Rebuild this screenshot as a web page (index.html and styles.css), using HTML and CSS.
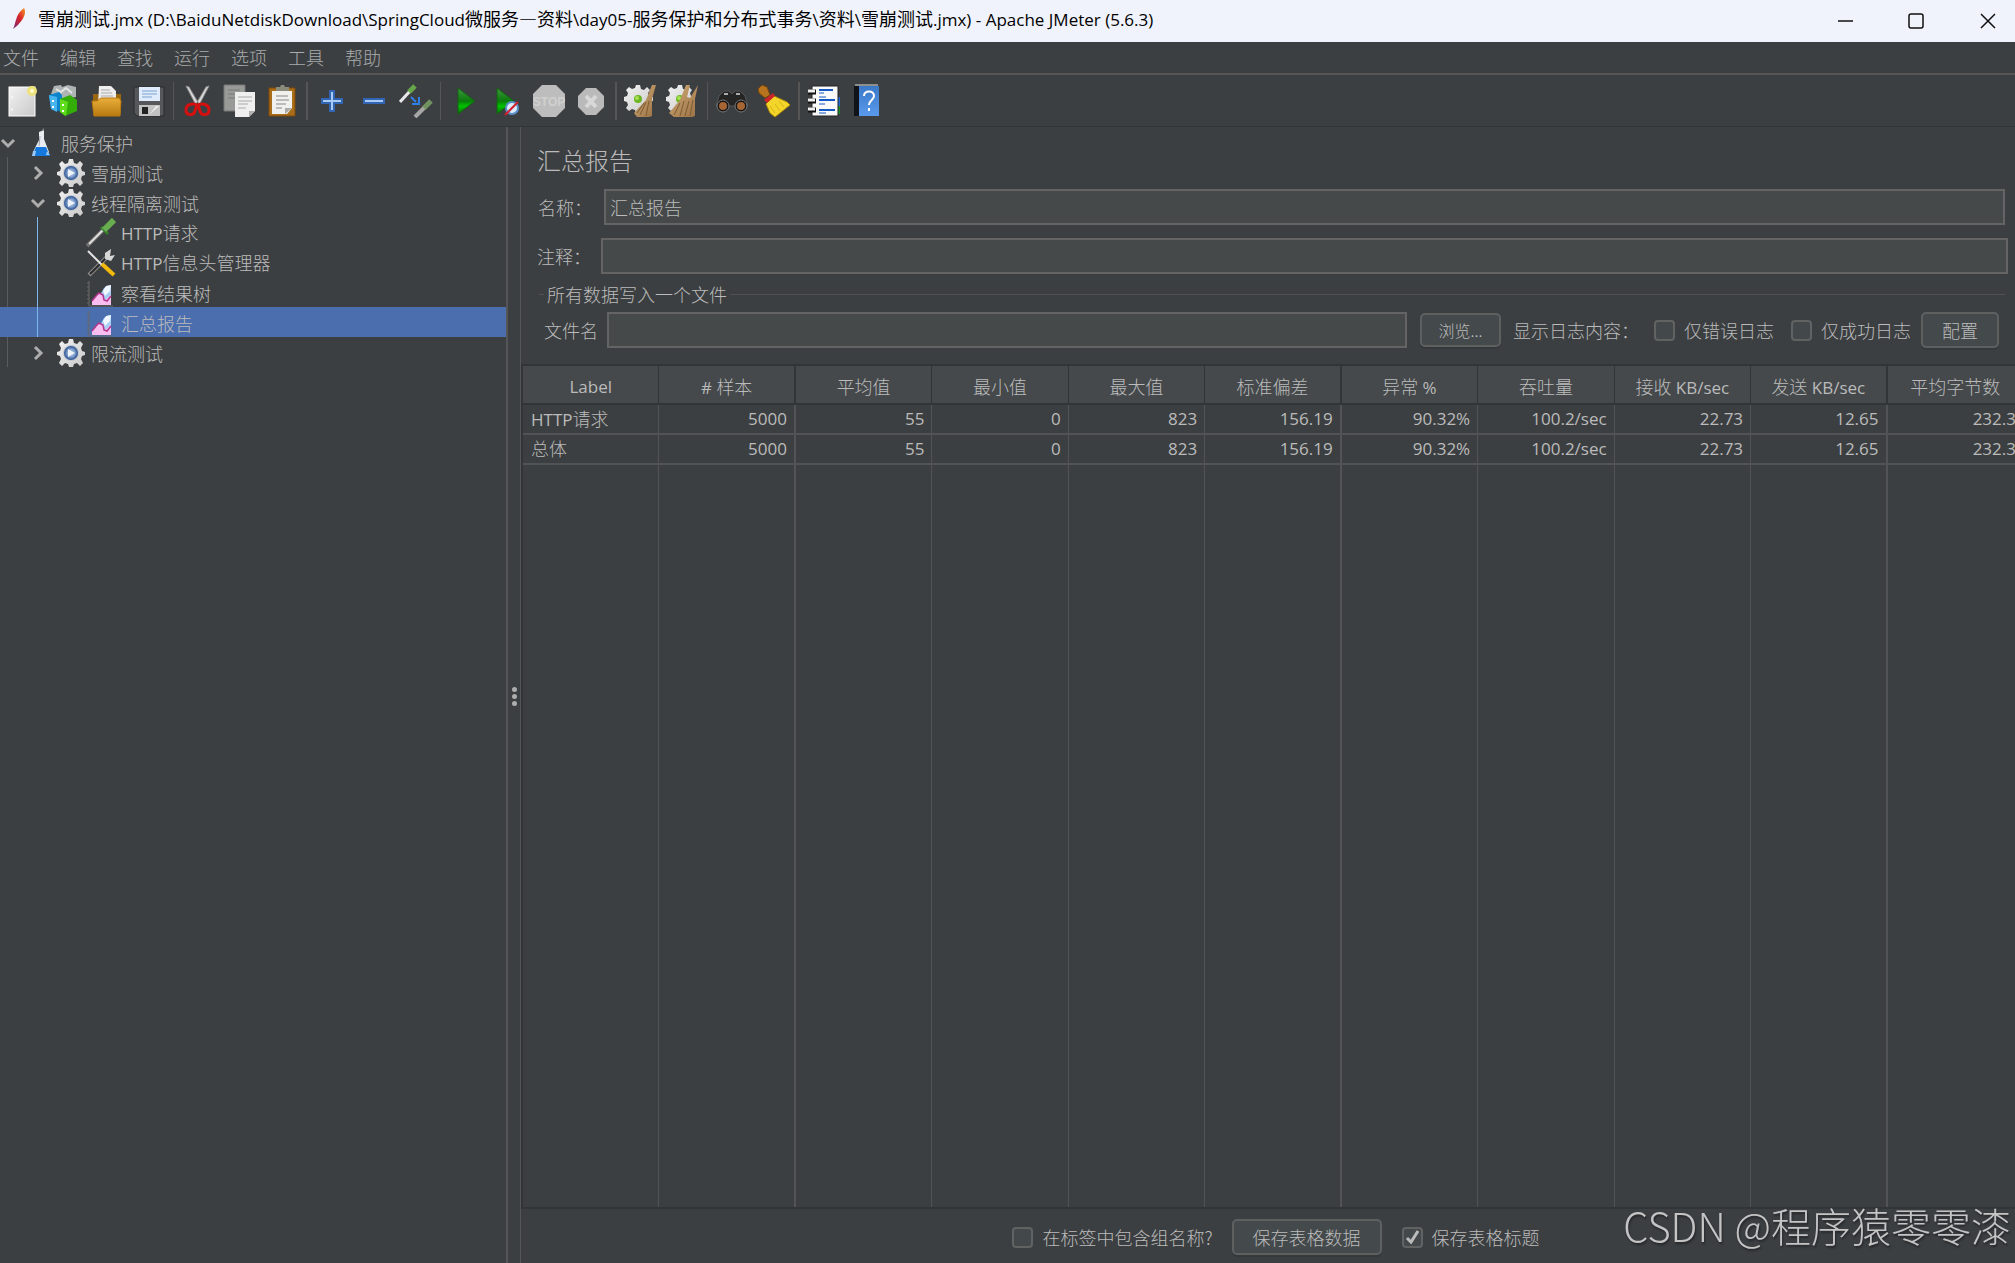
FILE: index.html
```html
<!DOCTYPE html>
<html lang="zh-CN">
<head>
<meta charset="utf-8">
<title>雪崩测试.jmx - Apache JMeter (5.6.3)</title>
<link rel="stylesheet" href="styles.css">
</head>
<body>
<svg class="defs" aria-hidden="true">
  <defs>
    <linearGradient id="silver" x1="0" y1="0" x2="1" y2="1"><stop offset="0" stop-color="#f2f2f2"/><stop offset="1" stop-color="#c9c9c9"/></linearGradient>
    <linearGradient id="gold" x1="0" y1="0" x2="0" y2="1"><stop offset="0" stop-color="#e9ae3a"/><stop offset="1" stop-color="#b87a10"/></linearGradient>
    <linearGradient id="play" x1="0" y1="0" x2="0" y2="1"><stop offset="0" stop-color="#3f9a3f"/><stop offset=".5" stop-color="#0b7a0b"/><stop offset=".7" stop-color="#00c400"/><stop offset="1" stop-color="#0a6b0a"/></linearGradient>
    <linearGradient id="straw" x1="0" y1="0" x2="1" y2="1"><stop offset="0" stop-color="#d2ac78"/><stop offset="1" stop-color="#9a7144"/></linearGradient>
    <linearGradient id="feather" x1="1" y1="0" x2="0" y2="1"><stop offset="0" stop-color="#f59a23"/><stop offset=".45" stop-color="#d9222a"/><stop offset="1" stop-color="#6c2a7c"/></linearGradient>
    <linearGradient id="bluebook" x1="0" y1="0" x2="0" y2="1"><stop offset="0" stop-color="#3b78c8"/><stop offset="1" stop-color="#5a9aec"/></linearGradient>
    <radialGradient id="orb" cx=".5" cy=".5" r=".5"><stop offset="0" stop-color="#9db7da"/><stop offset=".5" stop-color="#8aa8d2"/><stop offset="1" stop-color="#28508f"/></radialGradient>
    <symbol id="gear" viewBox="0 0 30 30">
      <path fill="url(#silver)" d="M13 1h4l1 4 3 1 3-3 3 3-2 4 1 3 3 1v3l-3 1-1 3 2 4-3 3-3-3-3 1-1 3h-4l-1-3-3-1-3 3-3-3 2-4-1-3-3-1v-3l3-1 1-3-2-4 3-3 3 3 3-1z"/>
      <circle cx="15" cy="15" r="8" fill="#c3c8cf"/>
      <circle cx="15" cy="15" r="7" fill="url(#orb)"/>
      <path d="M12 11l7 4-7 4z" fill="#eef3fa"/>
    </symbol>
    <symbol id="chart" viewBox="0 0 30 30">
      <path d="M3 3v25h24" fill="none" stroke="#6b6b6b"/><path d="M1 5h2M1 9h2M1 13h2M1 17h2M1 21h2M1 25h2" stroke="#666"/>
      <path d="M14 17l4-7 3-2 4-1v16h-6z" fill="#a6cdf2"/><path d="M17 13l3-5 5-1-1 6-5 5z" fill="#eef6ff"/>
      <path d="M6 27v-4l7-8 3 2 3 5 6-5v10z" fill="#f9bdf0"/><path d="M6 23l4-5 3-3 4 2 1 5 3 1 4-5" fill="none" stroke="#b3368e" stroke-width="1.500"/>
    </symbol>
    <symbol id="plainGear" viewBox="0 0 34 34">
      <path fill="url(#silver)" d="M12 1h4l1 4 3 1 3-3 3 3-2 3 1 3 4 1v4l-4 1-1 3 2 3-3 3-3-2-3 1-1 3h-4l-1-3-3-1-3 2-3-3 2-3-1-3-3-1v-4l3-1 1-3-2-3 3-3 3 2 3-1z"/>
      <circle cx="14" cy="15" r="4" fill="#6cb523"/><circle cx="13" cy="14" r="2" fill="#a7e052"/>
    </symbol>
    <symbol id="playArrow" viewBox="0 0 34 34"><path d="M10 4l17 13-17 13z" fill="url(#play)" stroke="#136013"/></symbol>
    <symbol id="down" viewBox="0 0 16 16"><path d="M2 5l6 6 6-6" fill="none" stroke="#adadad" stroke-width="3"/></symbol>
    <symbol id="right" viewBox="0 0 16 16"><path d="M5 2l6 6-6 6" fill="none" stroke="#adadad" stroke-width="3"/></symbol>
  </defs>
</svg>

<header class="titlebar">
  <svg class="app-icon" viewBox="0 0 16 24"><path d="M12 1c2 3 1 8-2 12-1 2-3 3-4 5l-5 4c2-4 2-7 3-9C5 8 8 4 12 1z" fill="url(#feather)"/></svg>
  <h1 class="window-title">雪崩测试<span class="en">.jmx (D:\BaiduNetdiskDownload\SpringCloud</span>微服务—资料<span class="en">\day05-</span>服务保护和分布式事务<span class="en">\</span>资料<span class="en">\</span>雪崩测试<span class="en">.jmx) - Apache JMeter (5.6.3)</span></h1>
  <div class="window-buttons">
    <button aria-label="最小化"><svg viewBox="0 0 18 18"><path d="M1 9h15"/></svg></button>
    <button aria-label="最大化"><svg viewBox="0 0 18 18"><rect x="2" y="2" width="14" height="14" rx="2"/></svg></button>
    <button aria-label="关闭"><svg viewBox="0 0 18 18"><path d="M2 2l14 14M16 2L2 16"/></svg></button>
  </div>
</header>

<nav class="menubar">
  <button>文件</button><button>编辑</button><button>查找</button><button>运行</button><button>选项</button><button>工具</button><button>帮助</button>
</nav>

<div class="toolbar">
  <button aria-label="新建"><svg viewBox="0 0 34 34"><rect x="3" y="3" width="26" height="29" fill="url(#silver)" stroke="#fff"/><path d="M6 12v3M6 24v3" stroke="#fff"/><circle cx="26" cy="7" r="5" fill="#eee37a"/><circle cx="26" cy="7" r="2" fill="#fffbd0"/></svg></button>
  <button aria-label="模板"><svg viewBox="0 0 34 34"><path d="M3 10l3-8 7-1 1 2 6-2 8 2v10l-14 3z" fill="#aeb4b4"/><path d="M8 5l5 3 5-4 6 5" stroke="#e2e5e5" stroke-width="2" fill="none"/><path d="M1 11l10-3 3 3v17L3 25z" fill="#0b84cc"/><path d="M1 11l8 2v15l-6-3z" fill="#47b4ee"/><path d="M12 15l10-4 7 5v11l-12 5-5-4z" fill="#33ad08"/><path d="M12 15l8 3-2 14-6-4z" fill="#5fdc1c"/><path d="M5 16v2M5 22v2M15 20v2M15 26v2" stroke="#fff" stroke-width="2"/></svg></button>
  <button aria-label="打开"><svg viewBox="0 0 34 34"><path d="M3 10h28v19H3z" fill="#98670f"/><path d="M9 2h12l5 5v14H8z" fill="#eee"/><path d="M11 6h9M11 9h11M11 12h12M11 15h12" stroke="#aaa"/><path d="M2 17h5l4-3h18l2 3-1 15H4z" fill="url(#gold)" stroke="#b9780e"/></svg></button>
  <button aria-label="保存"><svg viewBox="0 0 34 34"><path d="M2 3h30v29H5l-3-3z" fill="#55575a" stroke="#292b2d"/><path d="M7 3h21v14H7z" fill="#dfeafa"/><path d="M10 7h15M10 10h15M10 13h10" stroke="#7ba3d0"/><path d="M7 21h21v11H7z" fill="#c2c2c2"/><path d="M10 23h6v7h-6z" fill="#222"/><path d="M17 31l7-9h3z" fill="#eee"/></svg></button>
  <i class="sep"></i>
  <button aria-label="剪切"><svg viewBox="0 0 34 34"><path d="M5 2l3 1 10 17-2 3zM28 2l-3 1-10 17 2 3z" fill="#dadada" stroke="#8d8d8d"/><path d="M16 21c-4-2-11-1-11 5 0 6 8 6 9 1zM17 21c4-2 11-1 11 5 0 6-8 6-9 1z" fill="none" stroke="#d51010" stroke-width="3"/></svg></button>
  <button aria-label="复制"><svg viewBox="0 0 34 34"><path d="M1 1h21v26H1z" fill="#989a98" stroke="#777"/><path d="M5 6h12M5 10h12M5 14h12" stroke="#797b79"/><path d="M12 8h20v19l-6 6H12z" fill="#efefef"/><path d="M15 13h14M15 17h14M15 20h10M15 24h8" stroke="#aaa"/><path d="M26 33v-6h6z" fill="#b0b0b0"/></svg></button>
  <button aria-label="粘贴"><svg viewBox="0 0 34 34"><path d="M4 4h26v28H4z" fill="#aa6d19" stroke="#7c4b0b"/><path d="M7 7h20v17l-5 6H7z" fill="#f0f0ed"/><path d="M11 3h4l1-2h3l1 2h4v4H11z" fill="#8b8b7c"/><path d="M11 12h12M11 16h13M11 20h10M11 24h6" stroke="#888"/><path d="M20 30v-6h7z" fill="#aaa"/></svg></button>
  <i class="sep wide"></i>
  <button aria-label="展开"><svg viewBox="0 0 34 34"><path d="M15 7h4v8h8v4h-8v8h-4v-8H7v-4h8z" fill="#a9ccf7" stroke="#3266b5" stroke-width="2"/></svg></button>
  <button aria-label="收起"><svg viewBox="0 0 34 34"><path d="M7 15h20v4H7z" fill="#a9ccf7" stroke="#3266b5" stroke-width="2"/></svg></button>
  <button aria-label="切换"><svg viewBox="0 0 34 34"><path d="M1 18L12 6" stroke="#e8e8e8" stroke-width="3"/><path d="M10 8l6-6" stroke="#67a54a" stroke-width="5"/><path d="M12 13l5 5M13 20h7v-7" stroke="#2e80e5" stroke-width="2" fill="none"/><path d="M16 33l10-10" stroke="#a6a6a6" stroke-width="4"/><path d="M25 24l7-7" stroke="#72935f" stroke-width="5"/></svg></button>
  <i class="sep"></i>
  <button aria-label="启动"><svg><use href="#playArrow"/></svg></button>
  <button aria-label="无间隔启动"><svg viewBox="0 0 34 34"><path d="M7 4l17 13L7 30z" fill="url(#play)" stroke="#136013"/><circle cx="22" cy="24" r="6" fill="#dcecff" stroke="#5a8fc8" stroke-width="2"/><path d="M15 31l13-13" stroke="#d2222d" stroke-width="2"/></svg></button>
  <button aria-label="停止"><svg viewBox="0 0 34 34"><path d="M10 1h14l9 9v14l-9 9H10l-9-9V10z" fill="#bdbdbd"/><text x="17" y="22" text-anchor="middle" class="stop-text">STOP</text></svg></button>
  <button aria-label="关闭"><svg viewBox="0 0 34 34"><path d="M12 4h10l8 8v11l-8 8H12l-8-8V12z" fill="#bababa"/><path d="M12 12l10 11M22 12L12 23" stroke="#d8d8d8" stroke-width="4"/></svg></button>
  <i class="sep wide"></i>
  <button aria-label="清除"><svg viewBox="0 0 34 34"><use href="#plainGear" width="34" height="34"/><path d="M32 1l-4 14 0 17-3 1H13l-3-4 12-13 6-15z" fill="url(#straw)"/><path d="M22 18l-6 13M25 17l-3 15M20 19l-7 10" stroke="#7d5a34"/></svg></button>
  <button aria-label="清除全部"><svg viewBox="0 0 34 34"><use href="#plainGear" width="34" height="34"/><path d="M24 1l-3 12 3 1 8-13-3 14 0 17-3 1H8l-5-4 11-13 6-15z" fill="url(#straw)"/><path d="M14 19L8 31M18 17l-4 15M23 17l-4 15M27 16l-3 16" stroke="#7d5a34"/></svg></button>
  <i class="sep"></i>
  <button aria-label="查找"><svg viewBox="0 0 34 34"><path d="M4 12l5-5h5l3 3 3-3h5l5 5 3 10H1z" fill="#252525" stroke="#555"/><circle cx="8" cy="22" r="6" fill="#161616" stroke="#777"/><circle cx="26" cy="22" r="6" fill="#161616" stroke="#777"/><circle cx="8" cy="22" r="4" fill="#a66535"/><circle cx="26" cy="22" r="4" fill="#a66535"/><path d="M9 10h4M21 10h4" stroke="#aaa" stroke-width="2"/></svg></button>
  <button aria-label="重置查找"><svg viewBox="0 0 34 34"><path d="M1 5l4-4 5 2 3 8-5 3-6-5z" fill="#b8731e" stroke="#77450b"/><path d="M17 12l13 6 3 3-15 12-5-4-4-9z" fill="#f4d529" stroke="#b08c0a"/><path d="M13 22l5 7M18 20l5 7M22 17l5 6" stroke="#d8b318"/><path d="M7 16l9-7 2 3-8 7z" fill="#cc2427"/></svg></button>
  <i class="sep wide"></i>
  <button aria-label="函数助手"><svg viewBox="0 0 34 34"><path d="M28 13h5v9h-5z" fill="#2368d2"/><path d="M28 22h5v8h-5z" fill="#1c8c24"/><path d="M5 2h26v30H5z" fill="#fafafa" stroke="#222"/><path d="M12 6h14M12 16h16M12 26h16" stroke="#1559c4" stroke-width="2"/><path d="M12 9h5M12 13h7M12 20h6M12 29h7" stroke="#1559c4"/><path d="M1 8h8M1 17h8M1 26h8" stroke="#111" stroke-width="5"/><path d="M1 7h7M1 16h7M1 25h7" stroke="#eee" stroke-width="3"/></svg></button>
  <button aria-label="帮助"><svg viewBox="0 0 34 34"><path d="M5 2h6v30H5z" fill="#10131a"/><path d="M10 2h20v30H10z" fill="url(#bluebook)"/><path d="M6 1h23" stroke="#ddd"/><path d="M15 12c0-6 10-6 10 0 0 4-5 4-5 9M20 24v3" fill="none" stroke="#fff" stroke-width="2"/></svg></button>
</div>

<main class="workspace">
  <aside class="tree">
    <ul>
      <li>
        <div class="row"><svg class="arrow"><use href="#down"/></svg><svg class="node-icon" viewBox="0 0 30 30"><path d="M13 4l5-2v9l5 13v4H7v-4l6-12z" fill="#e8edf2"/><path d="M10 19h10l4 9H6z" fill="#1478dc"/><path d="M7 23h3l-1 5H6z" fill="#9cc7f2"/><path d="M21 23l-1 4h4z" fill="#9cc7f2"/><path d="M17 3V1h1" stroke="#8b8b8b" fill="none"/><path d="M14 8l-1 10" stroke="#9da4aa"/></svg><span>服务保护</span></div>
        <ul class="level1">
          <li><div class="row"><svg class="arrow"><use href="#right"/></svg><svg class="node-icon"><use href="#gear"/></svg><span>雪崩测试</span></div></li>
          <li><div class="row"><svg class="arrow"><use href="#down"/></svg><svg class="node-icon"><use href="#gear"/></svg><span>线程隔离测试</span></div>
            <ul class="level2">
              <li><div class="row"><i class="arrow"></i><svg class="node-icon" viewBox="0 0 30 30"><path d="M1 28L18 11" stroke="#6f6f6f" stroke-width="4"/><path d="M3 26L18 11" stroke="#dedede" stroke-width="2"/><path d="M15 9l7 7" stroke="#397e2b" stroke-width="3"/><path d="M18 12L28 2" stroke="#68ae50" stroke-width="6"/></svg><span><span class="en">HTTP</span>请求</span></div></li>
              <li><div class="row"><i class="arrow"></i><svg class="node-icon" viewBox="0 0 30 30"><path d="M3 27L22 8" stroke="#8b8b8b" stroke-width="4"/><path d="M4 26L22 8" stroke="#292929" stroke-width="2"/><path d="M25 1l-6 4v6l6 2 4-6-5 1z" fill="#d7d7d7"/><path d="M2 3l14 14" stroke="#e4e4e4" stroke-width="2"/><path d="M16 16l12 11" stroke="#f2b90c" stroke-width="4"/></svg><span><span class="en">HTTP</span>信息头管理器</span></div></li>
              <li><div class="row"><i class="arrow"></i><svg class="node-icon"><use href="#chart"/></svg><span>察看结果树</span></div></li>
              <li><div class="row selected"><i class="arrow"></i><svg class="node-icon"><use href="#chart"/></svg><span>汇总报告</span></div></li>
            </ul>
          </li>
          <li><div class="row"><svg class="arrow"><use href="#right"/></svg><svg class="node-icon"><use href="#gear"/></svg><span>限流测试</span></div></li>
        </ul>
      </li>
    </ul>
  </aside>
  <div class="splitter"><i></i><i></i><i></i></div>

  <section class="panel">
    <h2>汇总报告</h2>
    <div class="field name"><label for="name">名称：</label><input id="name" type="text" value="汇总报告"></div>
    <div class="field comment"><label for="comment">注释：</label><input id="comment" type="text"></div>
    <fieldset>
      <legend>所有数据写入一个文件</legend>
      <div class="file-row">
        <label for="file">文件名</label><input id="file" type="text">
        <button class="browse">浏览...</button>
        <span class="log-label">显示日志内容：</span>
        <label class="tick"><input type="checkbox">仅错误日志</label>
        <label class="tick"><input type="checkbox">仅成功日志</label>
        <button class="config">配置</button>
      </div>
    </fieldset>
    <div class="table-area">
      <table>
        <thead><tr><th>Label</th><th># <span>样本</span></th><th><span>平均值</span></th><th><span>最小值</span></th><th><span>最大值</span></th><th><span>标准偏差</span></th><th><span>异常</span> %</th><th><span>吞吐量</span></th><th><span>接收</span> KB/sec</th><th><span>发送</span> KB/sec</th><th><span>平均字节数</span></th></tr></thead>
        <tbody>
          <tr><td>HTTP<span>请求</span></td><td>5000</td><td>55</td><td>0</td><td>823</td><td>156.19</td><td>90.32%</td><td>100.2/sec</td><td>22.73</td><td>12.65</td><td>232.3</td></tr>
          <tr><td><span>总体</span></td><td>5000</td><td>55</td><td>0</td><td>823</td><td>156.19</td><td>90.32%</td><td>100.2/sec</td><td>22.73</td><td>12.65</td><td>232.3</td></tr>
          <tr class="filler"><td></td><td></td><td></td><td></td><td></td><td></td><td></td><td></td><td></td><td></td><td></td></tr>
        </tbody>
      </table>
    </div>
    <footer class="actions">
      <label class="tick"><input type="checkbox">在标签中包含组名称?</label>
      <button>保存表格数据</button>
      <label class="tick"><input type="checkbox" checked>保存表格标题</label>
    </footer>
  </section>
</main>
<div class="watermark">CSDN @程序猿零零漆</div>
</body>
</html>
```
FILE: styles.css
```css
* { box-sizing: border-box; }
body {
  margin: 0;
  height: 100vh;
  display: flex;
  flex-direction: column;
  overflow: hidden;
  background: #3c3f41;
  color: #bbb;
  font: 300 18px/24px "Noto Sans CJK SC", sans-serif;
}
button, input { font: inherit; color: inherit; margin: 0; }
button { padding: 0; border: 0; background: none; white-space: nowrap; }
ul { list-style: none; margin: 0; padding: 0; }
.defs { position: absolute; width: 0; height: 0; }
.en { font: 400 17px/24px "Open Sans", sans-serif; }

.titlebar {
  flex: none;
  height: 42px;
  display: flex;
  align-items: center;
  background: #f0f3fb;
  color: #000;
}
.app-icon { width: 16px; height: 24px; margin: 0 10px 4px 12px; }
.window-title { flex: 1; min-width: 0; margin: 0 0 4px; font-size: 18px; font-weight: 400; line-height: 24px; white-space: nowrap; overflow: hidden; }
.window-buttons { display: flex; }
.window-buttons button { width: 70px; height: 38px; display: flex; align-items: center; justify-content: center; }
.window-buttons button:last-child { width: 72px; padding-left: 2px; }
.window-buttons { margin-right: -8px; }
.window-buttons svg { width: 18px; height: 18px; fill: none; stroke: #111; stroke-width: 1.5; }

.menubar {
  flex: none;
  height: 33px;
  display: flex;
  gap: 21px;
  padding: 0 0 1px 3px;
  border-bottom: 2px solid #555;
  color: #a9abac;
}
.toolbar {
  flex: none;
  height: 52px;
  display: flex;
  padding-left: 2px;
  border-bottom: 1px solid #323537;
}
.toolbar button { width: 42px; height: 51px; display: flex; align-items: center; justify-content: center; }
.toolbar svg { width: 34px; height: 34px; }
.stop-text { font: 700 12px "Liberation Sans", sans-serif; fill: #d0d0d0; }
.sep { width: 7px; margin: 7px 0 6px; background: linear-gradient(#555, #555) center / 1px 100% no-repeat; }
.sep.wide { width: 8px; background-size: 2px 100%; }

.workspace { flex: 1; min-height: 0; display: flex; }
.tree { flex: 0 0 508px; border-right: 2px solid #555; }
.row { height: 30px; display: flex; align-items: center; padding-top: 2px; white-space: nowrap; }
.arrow { width: 16px; height: 16px; }
.node-icon { width: 30px; height: 30px; margin: 0 5px 0 10px; }
.level1, .level2 { position: relative; }
.level1::before, .level2::before { content: ""; position: absolute; top: 0; bottom: 0; left: 7px; width: 1px; background: #5a5d5f; }
.level2::before { left: 37px; background: #7cb8ee; }
.level1 .row { padding-left: 30px; }
.level2 .row { padding-left: 60px; }
.row.selected { background: #4b6eaf; }

.splitter {
  flex: 0 0 13px;
  display: flex;
  flex-direction: column;
  align-items: center;
  justify-content: center;
  gap: 2px;
  padding-top: 2px;
  border-right: 1px solid #555;
}
.splitter i { width: 5px; height: 5px; border-radius: 50%; background: #adadad; }

.panel { flex: 1; min-width: 0; display: flex; flex-direction: column; overflow: hidden; }
.panel h2 { margin: 15px 0 11px 16px; font-size: 24px; line-height: 36px; font-weight: 300; }
.field { display: flex; align-items: center; margin: 0 10px 13px 17px; }
.field label { flex: 0 0 66px; }
.field.comment { margin: 0 7px 9px 16px; }
.field.comment label { flex-basis: 64px; }
input[type="text"] {
  flex: 1;
  min-width: 0;
  height: 36px;
  padding: 0 4px;
  border: 2px solid #646464;
  border-radius: 0;
  background: #45494a;
}
fieldset { min-width: 0; margin: 0 10px 0 18px; padding: 0 6px 16px 5px; border: 0 solid #515151; border-top-width: 1px; }
legend { padding: 0 3px; line-height: 22px; }
.file-row { display: flex; align-items: center; margin-top: 7px; }
.file-row > label:first-child { margin-right: 9px; }
.panel button { height: 36px; border: 2px solid #5e6060; border-radius: 5px; background: #44494b; box-shadow: 0 2px 0 #36393b; }
.panel .browse { width: 81px; height: 34px; margin: 0 12px 0 13px; font-size: 16px; }
.panel .config { width: 78px; margin-left: 10px; }
.log-label { width: 124px; margin-right: 17px; white-space: nowrap; }
.tick { display: flex; align-items: center; white-space: nowrap; }
.tick + .tick { margin-left: 17px; }
.tick input { appearance: none; width: 21px; height: 21px; margin-right: 9px; border: 2px solid #616363; border-radius: 4px; background: #43494a; }
.tick input:checked { background: #43494a url("data:image/svg+xml,%3Csvg xmlns='http://www.w3.org/2000/svg' viewBox='0 0 17 17'%3E%3Cpath d='M3 9l4 4 7-11' fill='none' stroke='%23bbb' stroke-width='3'/%3E%3C/svg%3E") center / 17px 17px no-repeat; }

.table-area { flex: 1; min-height: 0; overflow: hidden; border: 2px solid #323537; border-width: 2px 0 2px 2px; }
table { width: calc(100% + 9px); height: 100%; table-layout: fixed; border-collapse: separate; border-spacing: 0; font-family: "Open Sans", sans-serif; font-size: 17px; font-weight: 400; }
th span, td span { font: 300 18px/24px "Noto Sans CJK SC", sans-serif; }
th { height: 39px; padding: 4px 0 0; font-weight: 400; line-height: 24px; white-space: nowrap; background: #45494b; border-right: 1px solid #323537; border-bottom: 2px solid #323537; }
td { height: 30px; padding: 0 7px; line-height: 24px; text-align: right; border-right: 1px solid #515354; border-bottom: 2px solid #515354; }
th:nth-child(4n+2) { border-right-width: 2px; }
td:nth-child(4n+2) { border-right-width: 2px; }
td:first-child { padding-left: 8px; text-align: left; }
.filler td { height: auto; border-bottom: 0; }
.actions { flex: none; height: 54px; display: flex; align-items: center; justify-content: center; padding: 2px 0 0 16px; }
.actions button { width: 150px; margin: 0 20px 0 19px; }
.watermark { position: fixed; right: 4px; bottom: 9px; font: 300 40px/58px "Noto Sans CJK SC", sans-serif; color: #c4c4c4; text-shadow: 1px 2px 2px #25272a; }
```
